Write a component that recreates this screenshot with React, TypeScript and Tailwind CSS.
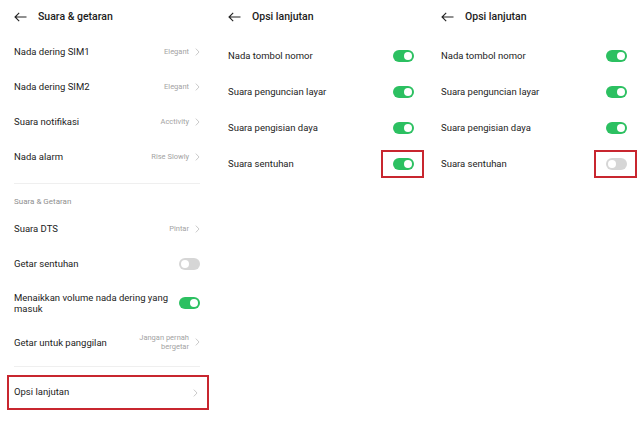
import React from 'react';

type Item = {
  label: string;
  value?: string[];
  toggle?: boolean;
  height: string;
};

const BackArrow = () => (
  <svg width="13" height="10" viewBox="0 0 13 10" fill="none" stroke="#222" strokeWidth="1.1">
    <path d="M12.5 5H1M5.2 0.8L1 5l4.2 4.2" />
  </svg>
);

const Chevron = () => (
  <svg width="5" height="8" viewBox="0 0 5 8" fill="none" stroke="#c4c4c4" strokeWidth="0.9">
    <path d="M0.8 0.6L4 4 0.8 7.4" />
  </svg>
);

const Toggle = ({ on, marked }: { on: boolean; marked?: boolean }) => (
  <div className="relative">
    <div
      className={
        on
          ? 'w-[21px] h-[12px] rounded-full bg-[#2cc061] flex items-center justify-end px-[2px]'
          : 'w-[21px] h-[12px] rounded-full bg-[#d6d6d6] flex items-center justify-start px-[2px]'
      }
    >
      <div className="w-[8px] h-[8px] rounded-full bg-white" />
    </div>
    {/* annotation box */}
    {marked && (
      <div className="absolute -left-[12px] -right-[10px] -top-[8px] -bottom-[8px] border-2 border-[#c8262f]" />
    )}
  </div>
);

const Header = ({ title }: { title: string }) => (
  <div className="h-[34px] flex items-center gap-[11px]">
    <BackArrow />
    <span className="text-[10.5px] font-medium text-[#1c1c1c]">{title}</span>
  </div>
);

const Row = ({ item }: { item: Item }) => (
  <div className={`flex items-center justify-between ${item.height}`}>
    <span className="text-[9.5px] leading-[11px] text-[#232323] max-w-[160px]">{item.label}</span>
    {item.toggle !== undefined ? (
      <Toggle on={item.toggle} />
    ) : (
      <div className="flex items-center gap-[6px]">
        <div className="flex flex-col items-end text-[7.5px] leading-[9px] text-[#a3a3a3]">
          {item.value?.map(v => <span key={v}>{v}</span>)}
        </div>
        <Chevron />
      </div>
    )}
  </div>
);

const topItems: Item[] = [
  { label: 'Nada dering SIM1', value: ['Elegant'], height: 'h-[35px]' },
  { label: 'Nada dering SIM2', value: ['Elegant'], height: 'h-[35px]' },
  { label: 'Suara notifikasi', value: ['Acctivity'], height: 'h-[35px]' },
  { label: 'Nada alarm', value: ['Rise Slowly'], height: 'h-[35px]' },
];

const soundItems: Item[] = [
  { label: 'Suara DTS', value: ['Pintar'], height: 'h-[35px]' },
  { label: 'Getar sentuhan', toggle: false, height: 'h-[35px]' },
  { label: 'Menaikkan volume nada dering yang masuk', toggle: true, height: 'h-[43px]' },
  { label: 'Getar untuk panggilan', value: ['Jangan pernah', 'bergetar'], height: 'h-[36px]' },
];

const advancedLabels = ['Nada tombol nomor', 'Suara penguncian layar', 'Suara pengisian daya', 'Suara sentuhan'];

const AdvancedPanel = ({ lastOn }: { lastOn: boolean }) => (
  <div>
    <Header title="Opsi lanjutan" />
    <div className="pt-[4px]">
      {advancedLabels.map((label, i) => (
        <div key={label} className="h-[36px] flex items-center justify-between">
          <span className="text-[9.5px] text-[#232323]">{label}</span>
          {i === 3 ? <Toggle on={lastOn} marked /> : <Toggle on />}
        </div>
      ))}
    </div>
  </div>
);

export default function App() {
  return (
    <div
      className="w-[640px] h-[435px] bg-white overflow-hidden grid grid-cols-[213px_212px_215px]"
      style={{ fontFamily: 'Roboto, "Noto Sans", sans-serif' }}
    >
      {/* Suara & getaran */}
      <div className="pl-[14px] pr-[13px]">
        <Header title="Suara & getaran" />
        {topItems.map(item => (
          <Row key={item.label} item={item} />
        ))}
        <div className="mt-[9px] h-px bg-[#efefef]" />
        <div className="h-[27px] pt-[8px] flex items-center text-[8px] text-[#8f8f8f]">Suara &amp; Getaran</div>
        {soundItems.map(item => (
          <Row key={item.label} item={item} />
        ))}
        <div className="mt-[6px] h-px bg-[#efefef]" />
        <div className="mt-[8px] -ml-[7px] -mr-[9px] h-[35px] border-2 border-[#c8262f] flex items-center justify-between pl-[5px] pr-[9px]">
          <span className="text-[9.5px] text-[#232323]">Opsi lanjutan</span>
          <Chevron />
        </div>
      </div>

      <div className="pl-[15px] pr-[11px]">
        <AdvancedPanel lastOn />
      </div>

      <div className="pl-[16px] pr-[13px]">
        <AdvancedPanel lastOn={false} />
      </div>
    </div>
  );
}
